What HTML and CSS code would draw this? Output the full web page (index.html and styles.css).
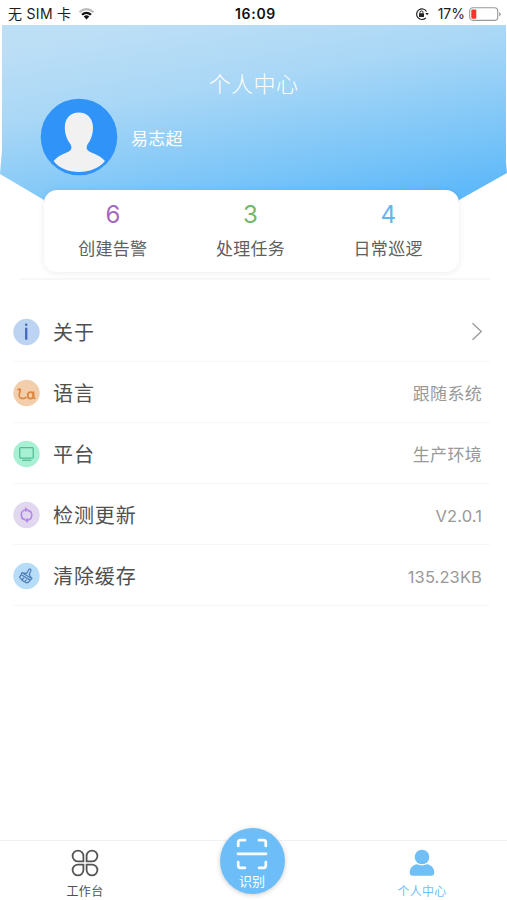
FILE: index.html
```html
<!DOCTYPE html>
<html lang="zh-CN">
<head>
<meta charset="utf-8">
<title>个人中心</title>
<link rel="stylesheet" href="styles.css">
</head>
<body>
<div class="app">
  <header class="status">
    <div class="carrier"><span>无 SIM 卡</span>
      <svg width="17" height="13" viewBox="0 0 17 13"><path d="M.8 4.4Q8.5-2.500 16.200 4.400L14.800 6Q8.500.7 2.200 6Z" fill="#bbb"/><path d="M3.200 7Q8.500 2.400 13.800 7L12.200 8.600Q8.500 5.500 4.800 8.600Z" fill="#111"/><path d="M5.700 9.500Q8.500 7.100 11.300 9.500L8.500 12.400Z" fill="#111"/></svg>
    </div>
    <time>16:09</time>
    <div class="power">
      <svg width="14" height="14" viewBox="0 0 14 14" fill="none" stroke="#222"><path d="M11.500 4.500A5.300 5.300 0 1 0 10.800 10.800" stroke-width="1.200"/><path d="M10.400 6h3.400l-1.700 2.300z" fill="#222" stroke="none"/><rect x="4" y="6.200" width="5" height="3.800" rx=".5" fill="#222" stroke="none"/><path d="M5 6.500V5.400a1.500 1.500 0 0 1 3 0v1.100"/></svg>
      <span>17%</span>
      <svg width="32" height="14" viewBox="0 0 32 14"><rect x=".7" y=".8" width="28" height="12.600" rx="3.200" fill="#fff" stroke="#999" stroke-width="1.100"/><rect x="2.300" y="2.500" width="5" height="9.200" rx="1" fill="#f9332c"/><path d="M30.200 5v4.400q1.500-.8 1.500-2.200T30.200 5z" fill="#999"/></svg>
    </div>
  </header>

  <section class="hero">
    <h1>个人中心</h1>
    <div class="profile">
      <svg width="78" height="78" viewBox="0 0 78 78"><circle cx="39" cy="39" r="38.300" fill="#2f93f8"/><path d="M38.800 14.500c-8.200 0-14 6-14 14.800 0 7.600 2.500 12.600 5.800 17.200 2 4 .3 6.500-4.500 8.300-5.500 2-9.500 4.700-12.500 8.200C19.500 70.500 28.500 74 39 74s19.500-3.500 26-11c-3-3.500-7.500-6.200-13-8.200-4.800-1.800-6.500-4.300-4.500-8.300 3.300-4.600 5.500-9.600 5.500-17.200 0-8.800-6-14.800-14.200-14.800z" fill="#f1f1f1"/></svg>
      <span class="name">易志超</span>
    </div>
  </section>

  <section class="stats">
    <div class="stat purple"><b>6</b><span>创建告警</span></div>
    <div class="stat green"><b>3</b><span>处理任务</span></div>
    <div class="stat blue"><b>4</b><span>日常巡逻</span></div>
  </section>

  <main class="list">
    <div class="row">
      <svg class="icon" viewBox="0 0 28 28"><circle cx="14" cy="14" r="13.700" fill="#bcd4f2"/><path d="M13.700 9.500v12.500" stroke="#4767b8" stroke-width="2.400"/><circle cx="13.700" cy="6.500" r="1.300" fill="#4767b8"/></svg>
      <span class="label">关于</span>
      <svg class="chevron" width="12" height="19" viewBox="0 0 12 19" fill="none" stroke="#999" stroke-width="1.300"><path d="M1.500 1.200l8.800 8.300-8.800 8.300"/></svg>
    </div>
    <div class="row">
      <svg class="icon" viewBox="0 0 28 28" fill="none"><circle cx="14" cy="14" r="13.700" fill="#f3ceac"/><g stroke="#dc8741" stroke-width="1.800" stroke-linecap="round" stroke-linejoin="round"><path d="M5.300 10.500q1.800-1 2.300.2C7.500 12.500 6 15 6.500 17.500c.8 2.700 4.500 2.700 7 1.200"/><ellipse cx="18.200" cy="16.500" rx="2.900" ry="3.300"/><path d="M21.300 13v5q0 1.600 1.200 1.600"/></g></svg>
      <span class="label">语言</span><span class="value">跟随系统</span>
    </div>
    <div class="row">
      <svg class="icon" viewBox="0 0 28 28" fill="none"><circle cx="14" cy="14" r="13.700" fill="#a8f0d3"/><g stroke="#52bc96" stroke-width="1.300"><rect x="7" y="7.500" width="14" height="10.800" rx="1"/><path d="M9.500 20.500h9.500"/></g></svg>
      <span class="label">平台</span><span class="value">生产环境</span>
    </div>
    <div class="row">
      <svg class="icon" viewBox="0 0 28 28" fill="none"><circle cx="14" cy="14" r="13.700" fill="#e1d7ee"/><g stroke="#b187e8" stroke-width="1.600"><path d="M10.800 18.500C7.500 15.500 7.500 9.300 13.500 8.600"/><path d="M17.200 9.500c3.300 3 3.300 9.200-2.700 9.900"/></g><path d="M12.500 5.700l3.500 2.800-3.300 2.700zM15.500 16.800l-3.500 2.700 3.300 2.800zM8.300 17.500h4.200v2.500zM19.700 10.500h-4.200V8z" fill="#b187e8"/></svg>
      <span class="label">检测更新</span><span class="value">V2.0.1</span>
    </div>
    <div class="row">
      <svg class="icon" viewBox="0 0 28 28" fill="none"><circle cx="14" cy="14" r="13.700" fill="#b6dcf8"/><g stroke="#4f7db8" stroke-width="1.250" stroke-linejoin="round" stroke-linecap="round"><path d="M9.300 10.700l5 .5 2-3.700q.8-1.200 1.700-.7 1 .5.500 1.700L16.800 12.400l2.700 4.300z"/><path d="M9.300 10.700l-.9 2.100 9.500 5.500 1.600-1.600M8.400 12.800q-.7 1.700-1.600 2.300 2.700 4.300 7.200 6.100 2.500-.5 3.900-2.900M9.500 17.600l1.700-1.500M12.300 19.700l1.500-1.700"/></g></svg>
      <span class="label">清除缓存</span><span class="value">135.23KB</span>
    </div>
  </main>

  <nav class="tabs">
    <a class="tab">
      <svg width="28" height="28" viewBox="0 0 28 28" fill="none" stroke="#555" stroke-width="1.800"><path d="M12.400 12.400H7A5.400 5.400 0 1 1 12.400 7zM15.600 12.400V7A5.400 5.400 0 1 1 21 12.400zM12.400 15.600V21A5.400 5.400 0 1 1 7 15.600zM15.600 15.600H21A5.400 5.400 0 1 1 15.600 21z"/></svg>
      <span>工作台</span>
    </a>
    <a class="scan">
      <svg width="32" height="32" viewBox="0 0 32 32" fill="none" stroke="#fff" stroke-width="2.700" stroke-linecap="round"><path d="M2.200 8V4.500q0-2.300 2.300-2.300H9M23 2.200h4.500q2.300 0 2.300 2.300V8M2.200 24v3.500q0 2.300 2.300 2.300H9M23 29.800h4.500q2.300 0 2.300-2.300V24M2 15.800h28"/></svg>
      <span>识别</span>
    </a>
    <a class="tab active">
      <svg width="26" height="28" viewBox="0 0 26 28" fill="#70bff7"><circle cx="13" cy="8" r="7.300"/><path d="M8 15.300q5 2.300 10 0c4.300.5 7.300 4 7.300 8.500 0 2-1 3-3 3H3.700c-2 0-3-1-3-3 0-4.500 3-8 7.300-8.500z"/></svg>
      <span>个人中心</span>
    </a>
  </nav>
</div>
</body>
</html>
```
FILE: styles.css
```css
* { box-sizing: border-box; }
body {
  margin: 0;
  background: #fff;
  color: #505050;
  font-family: Inter, "Noto Sans CJK SC", sans-serif;
}
svg { display: block; flex: none; }
.app {
  width: 507px;
  height: 900px;
  display: flex;
  flex-direction: column;
  overflow: hidden;
}
.status {
  height: 25px;
  flex: none;
  display: grid;
  grid-template-columns: 1fr auto 1fr;
  align-items: center;
  padding: 2px 6px 0 8px;
  color: #1c1c1c;
  font-size: 14px;
  line-height: 20px;
}
.status time { font-weight: 600; letter-spacing: .7px; color: #111; padding-left: 2px; }
.carrier, .power { display: flex; align-items: center; }
.carrier { gap: 7px; letter-spacing: .3px; }
.power { justify-content: flex-end; }
.power span { margin: 0 4px 0 9px; }
.hero {
  position: relative;
  z-index: 0;
  height: 165px;
  flex: none;
  color: #fff;
}
.hero::before {
  content: "";
  position: absolute;
  z-index: -1;
  inset: 0 0 -30px;
  background: linear-gradient(170deg, #bddff6 8%, #a9d7f6 35%, #78c4f8 70%, #4cb0fa 100%);
  clip-path: polygon(2px 0, 506px 0, 506px 138px, 507px 148px, 459px 175px, 459px 190px, 44px 190px, 44px 175px, 0 149px, 2px 125px);
}
.hero h1 {
  margin: 0;
  padding-top: 43px;
  font-size: 22px;
  line-height: 32px;
  font-weight: 300;
  letter-spacing: .4px;
  text-align: center;
}
.profile {
  display: flex;
  align-items: center;
  gap: 13px;
  margin: -2px 0 0 40px;
}
.name { font-size: 17px; line-height: 24px; padding-top: 3px; letter-spacing: .2px; }
.stats {
  position: relative;
  z-index: 1;
  flex: none;
  height: 82px;
  margin: 0 48px 0 44px;
  padding-right: 2px;
  display: grid;
  grid-template-columns: repeat(3, 1fr);
  background: #fff;
  border-radius: 13px;
  box-shadow: 0 1px 7px rgba(0, 0, 0, .08);
}
.stat { display: flex; flex-direction: column; align-items: center; }
.stat b { margin-top: 10px; font-size: 24px; line-height: 30px; font-weight: 400; }
.stat span { margin-top: 6px; font-size: 17px; line-height: 26px; letter-spacing: .3px; color: #606060; }
.purple b { color: #a568bd; }
.green b { color: #71b866; }
.blue b { color: #62b5ee; }
.list { flex: 1; padding-top: 29px; }
.list::before {
  content: "";
  display: block;
  height: 2px;
  margin: -23px 17px 21px 20px;
  background: #f7f7f7;
}
.row {
  height: 61px;
  display: flex;
  align-items: center;
  margin: 0 17px 0 13px;
  padding: 1px 8px 0 0;
  border-bottom: 1px solid #f7f7f7;
}
.icon { width: 27px; height: 28px; }
.label { margin-left: 13px; padding-top: 3px; font-size: 20px; line-height: 30px; letter-spacing: .9px; flex: 1; }
.value { padding-top: 2px; font-size: 17px; line-height: 26px; letter-spacing: .3px; color: #999; }
.row:nth-child(n+4) .value { font-size: 16.500px; letter-spacing: .1px; }
.chevron { margin-right: -1px; }
.tabs {
  flex: none;
  height: 60px;
  border-top: 1px solid #f0f0f0;
  display: flex;
  justify-content: space-between;
}
.tab {
  width: 170px;
  padding-top: 8px;
  display: flex;
  flex-direction: column;
  align-items: center;
  font-size: 12px;
  line-height: 18px;
}
.tab span { margin-top: 6px; letter-spacing: .3px; }
.tab.active { color: #70bff7; }
.scan {
  width: 65px;
  height: 66px;
  flex: none;
  margin: -13px 3px 0 0;
  padding-top: 10px;
  display: flex;
  flex-direction: column;
  align-items: center;
  border-radius: 50%;
  background: #6dbef8;
  box-shadow: 0 1px 5px rgba(0, 0, 0, .2);
  color: #fff;
  font-size: 13px;
  line-height: 18px;
}
.scan span { margin-top: 2px; }
```
